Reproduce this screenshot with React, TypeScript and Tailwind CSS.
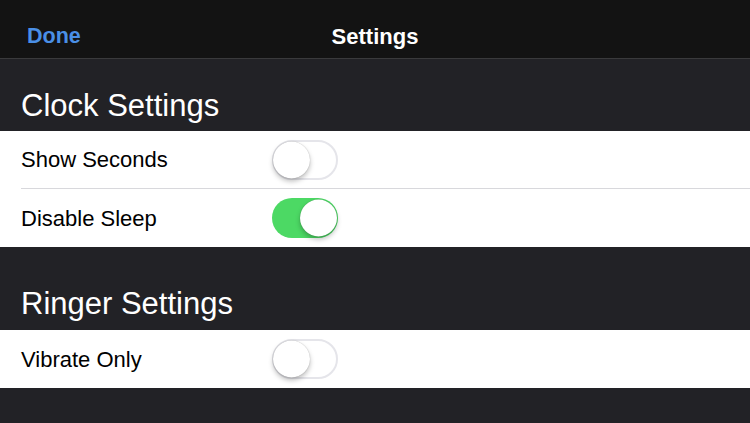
import React from 'react';

function Toggle({ on }: { on: boolean }) {
  return (
    <div
      className={`relative w-[66px] h-[40px] rounded-full ${
        on ? 'bg-[#4cd964]' : 'bg-white border-2 border-[#e5e5ea]'
      }`}
    >
      <div
        className={`absolute top-1/2 -translate-y-1/2 w-[37px] h-[37px] rounded-full bg-white shadow-[0_3px_5px_rgba(0,0,0,0.25),0_0_1px_rgba(0,0,0,0.3)] ${
          on ? 'right-[1px]' : 'left-[-1px]'
        }`}
      />
    </div>
  );
}

function Row({ label, on, last }: { label: string; on: boolean; last?: boolean }) {
  return (
    <div className="bg-white pl-[21px]">
      <div className={`h-[58px] flex items-center ${last ? '' : 'border-b border-[#d8d8dc]'}`}>
        <span className="w-[251px] text-[22px] text-black">{label}</span>
        <Toggle on={on} />
      </div>
    </div>
  );
}

export default function App() {
  return (
    <div
      className="w-[750px] h-[423px] bg-[#222226] overflow-hidden"
      style={{ fontFamily: '"Liberation Sans", Arial, sans-serif' }}
    >
      {/* Nav bar */}
      <div className="relative h-[59px] pt-[14px] bg-[#131313] border-b border-[#3a3a3c] flex items-center justify-center">
        <span className="absolute left-[27px] top-[22px] text-[21.5px] leading-[28px] font-semibold text-[#4a8fe6]">Done</span>
        <span className="text-[22px] font-bold text-white">Settings</span>
      </div>

      {/* Clock section */}
      <div className="h-[72px] flex items-end pl-[21px] pb-[7px]">
        <span className="text-[31px] leading-[36px] text-white">Clock Settings</span>
      </div>
      <Row label="Show Seconds" on={false} />
      <Row label="Disable Sleep" on={true} last />

      {/* Ringer section */}
      <div className="h-[83px] flex items-end pl-[21px] pb-[8px]">
        <span className="text-[31px] leading-[36px] text-white">Ringer Settings</span>
      </div>
      <Row label="Vibrate Only" on={false} last />
    </div>
  );
}
